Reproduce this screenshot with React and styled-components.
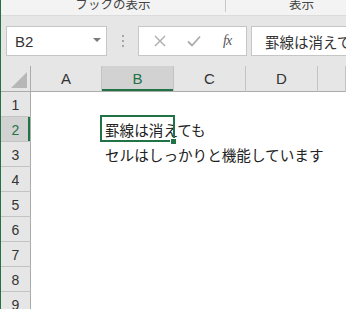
import React from "react";
import styled, { createGlobalStyle } from "styled-components";

const GlobalStyle = createGlobalStyle`
  html, body {
    margin: 0;
    padding: 0;
    overflow: hidden;
    background: #ffffff;
  }
  body {
    font-family: "Liberation Sans", "Noto Sans CJK JP", sans-serif;
  }
`;

const JP = `"Noto Sans CJK JP", "Noto Sans", sans-serif`;
const GREEN = "#217346";

const Window = styled.div`
  width: 345px;
  height: 309px;
  border-left: 1px solid ${GREEN};
  overflow: hidden;
  background: #ffffff;
`;

const RibbonGroups = styled.div`
  display: flex;
  height: 15px;
  background: #f3f3f3;
  border-bottom: 1px solid #dcdcdc;
`;

const GroupLabel = styled.div`
  flex: 0 0 ${(p) => p.$width}px;
  display: flex;
  align-items: center;
  justify-content: center;
  font-family: ${JP};
  font-size: 12.5px;
  line-height: 1;
  color: #444444;
  margin-top: -3px;
  border-right: 1px solid ${(p) => (p.$divider ? "#c8c8c8" : "transparent")};
  height: 15px;
  box-sizing: border-box;
`;

const FormulaBar = styled.div`
  display: flex;
  align-items: center;
  height: 50px;
  padding-left: 5px;
  background: #e6e6e6;
`;

const FieldBox = styled.div`
  height: 30px;
  box-sizing: border-box;
  background: #ffffff;
  border: 1px solid #c6c6c6;
  display: flex;
  align-items: center;
`;

const NameBox = styled(FieldBox)`
  flex: 0 0 101px;
  justify-content: space-between;
  padding: 0 5px 0 8px;
  font-size: 15px;
  color: #333333;
`;

const Caret = styled.span`
  width: 0;
  height: 0;
  border-left: 4px solid transparent;
  border-right: 4px solid transparent;
  border-top: 4px solid #7a7a7a;
  margin-top: -2px;
`;

const Grip = styled.div`
  flex: 0 0 31px;
  display: flex;
  flex-direction: column;
  align-items: center;
  gap: 3px;
  span {
    width: 2px;
    height: 2px;
    background: #a6a6a6;
  }
`;

const FxButtons = styled(FieldBox)`
  flex: 0 0 109px;
  justify-content: space-around;
  padding: 0 4px 0 4px;
`;

const FxLabel = styled.span`
  font-family: "Liberation Serif", "DejaVu Serif", serif;
  font-style: italic;
  font-size: 14px;
  color: #555555;
  letter-spacing: -1px;
`;

const FormulaInput = styled(FieldBox)`
  flex: 1 0 auto;
  margin-left: 4px;
  margin-right: -40px;
  padding-left: 13px;
  font-family: ${JP};
  font-size: 14.5px;
  color: #333333;
  white-space: nowrap;
`;

const Sheet = styled.div`
  display: grid;
  grid-template-columns: 30px 71px 72px 72px 72px 1fr;
  grid-template-rows: 26px;
  grid-auto-rows: 25px;
`;

const HeaderCell = styled.div`
  box-sizing: border-box;
  display: flex;
  align-items: center;
  justify-content: center;
  font-size: 15px;
  color: ${(p) => (p.$active ? GREEN : "#333333")};
  background: ${(p) => (p.$active ? "#d2d2d2" : "#e6e6e6")};
  border-right: 1px solid #c3c3c3;
  border-bottom: 1px solid #ababab;
  box-shadow: ${(p) => (p.$active ? `inset 0 -2px 0 ${GREEN}` : "none")};
`;

const Corner = styled(HeaderCell)`
  position: relative;
  border-right-color: #ababab;
  &::after {
    content: "";
    position: absolute;
    right: 3px;
    bottom: 3px;
    width: 0;
    height: 0;
    border-left: 16px solid transparent;
    border-bottom: 16px solid #b7b7b7;
  }
`;

const RowHeader = styled.div`
  box-sizing: border-box;
  display: flex;
  align-items: center;
  justify-content: center;
  padding-top: 1px;
  font-size: 14px;
  color: ${(p) => (p.$active ? GREEN : "#333333")};
  background: ${(p) => (p.$active ? "#d2d2d2" : "#e6e6e6")};
  border-right: 1px solid #ababab;
  border-bottom: 1px solid #c3c3c3;
  box-shadow: ${(p) => (p.$active ? `inset -2px 0 0 ${GREEN}` : "none")};
`;

const Cell = styled.div`
  position: relative;
  display: flex;
  align-items: center;
  padding-left: 3px;
  white-space: nowrap;
  overflow: visible;
  font-family: ${JP};
  font-size: 14.6px;
  color: #222222;
  &::before {
    content: "";
    display: ${(p) => (p.$selected ? "block" : "none")};
    position: absolute;
    top: -2px;
    left: -2px;
    right: -1px;
    bottom: 0px;
    border: 2px solid ${GREEN};
    z-index: 1;
  }
  &::after {
    content: "";
    display: ${(p) => (p.$selected ? "block" : "none")};
    position: absolute;
    right: -3px;
    bottom: -3px;
    width: 5px;
    height: 5px;
    background: ${GREEN};
    border: 1px solid #ffffff;
    z-index: 2;
  }
`;

const columns = ["A", "B", "C", "D", ""];
const data = {
  2: "罫線は消えても",
  3: "セルはしっかりと機能しています",
};

function CancelIcon() {
  return (
    <svg width="12" height="12" viewBox="0 0 12 12">
      <path d="M1 1 L11 11 M11 1 L1 11" stroke="#ababab" strokeWidth="1.4" fill="none" />
    </svg>
  );
}

function EnterIcon() {
  return (
    <svg width="14" height="12" viewBox="0 0 14 12">
      <path d="M1 6.5 L5 10.5 L13 1.5" stroke="#ababab" strokeWidth="1.8" fill="none" />
    </svg>
  );
}

export default function App() {
  const rows = [1, 2, 3, 4, 5, 6, 7, 8, 9];
  return (
    <>
      <GlobalStyle />
      <Window>
        <RibbonGroups>
          <GroupLabel $width={225} $divider>
            ブックの表示
          </GroupLabel>
          <GroupLabel $width={152} $divider>
            表示
          </GroupLabel>
        </RibbonGroups>
        <FormulaBar>
          <NameBox>
            B2
            <Caret />
          </NameBox>
          <Grip>
            <span />
            <span />
            <span />
          </Grip>
          <FxButtons>
            <CancelIcon />
            <EnterIcon />
            <FxLabel>fx</FxLabel>
          </FxButtons>
          <FormulaInput>罫線は消えても</FormulaInput>
        </FormulaBar>
        <Sheet>
          <Corner />
          {columns.map((c) => (
            <HeaderCell key={c || "E"} $active={c === "B"}>
              {c}
            </HeaderCell>
          ))}
          {rows.map((r) => (
            <React.Fragment key={r}>
              <RowHeader $active={r === 2}>{r}</RowHeader>
              <Cell />
              <Cell $selected={r === 2}>{data[r] || ""}</Cell>
              <Cell />
              <Cell />
              <Cell />
            </React.Fragment>
          ))}
        </Sheet>
      </Window>
    </>
  );
}
